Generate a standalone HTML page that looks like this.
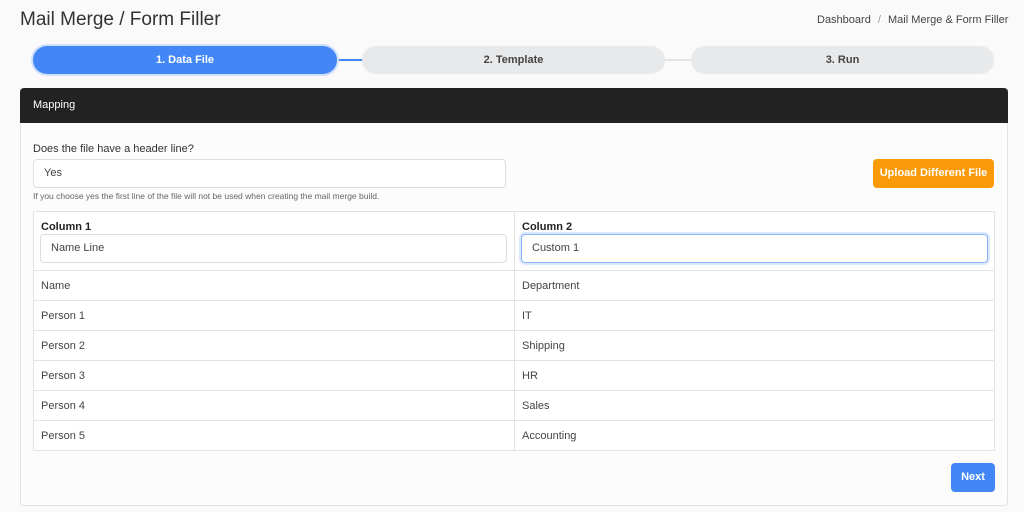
<!DOCTYPE html>
<html><head><style>
*{box-sizing:border-box;margin:0;padding:0}
body{width:1024px;height:512px;background:#fafafa;font-family:"Liberation Sans",Arial,sans-serif;color:#333;position:relative;overflow:hidden}
.a{position:absolute}
.pill{position:absolute;top:46px;height:28px;border-radius:14px;background:#e8e9ea;font-size:11px;font-weight:bold;color:#444;text-align:center;line-height:28px}
.inp{position:absolute;background:#fff;border:1px solid #ddd;border-radius:4px;font-size:11px;color:#444;padding-left:10px}
td{border:1px solid #e3e3e3;font-size:11px;color:#444;padding-left:7px;height:30px}
</style></head><body>
<div class="a" style="left:20px;top:9px;font-size:19px;color:#333">Mail Merge / Form Filler</div>
<div class="a" style="left:817px;top:14px;font-size:11px;color:#444">Dashboard <span style="color:#999;margin:0 4px">/</span> Mail Merge &amp; Form Filler</div>
<div class="a" style="left:330px;top:59px;width:40px;height:2px;background:#4287f5"></div>
<div class="a" style="left:660px;top:59px;width:40px;height:2px;background:#e3e3e3"></div>
<div class="pill" style="left:33px;width:304px;background:#4287f5;color:#fff;box-shadow:0 0 0 2px #cfe0fc">1. Data File</div>
<div class="pill" style="left:362px;width:303px">2. Template</div>
<div class="pill" style="left:691px;width:303px">3. Run</div>
<div class="a" style="left:20px;top:88px;width:988px;height:418px;background:#fcfcfc;border:1px solid #e3e3e3;border-radius:4px"></div>
<div class="a" style="left:20px;top:88px;width:988px;height:35px;background:#222;border-radius:4px 4px 0 0;color:#fff;font-size:11px;padding:11px 0 0 13px">Mapping</div>
<div class="a" style="left:33px;top:143px;font-size:11px;color:#333">Does the file have a header line?</div>
<div class="inp" style="left:33px;top:159px;width:473px;height:29px;line-height:27px">Yes</div>
<div class="a" style="left:33px;top:191px;font-size:8.5px;color:#666">If you choose yes the first line of the file will not be used when creating the mail merge build.</div>
<div class="a" style="left:873px;top:159px;width:121px;height:29px;background:#fb9a08;border-radius:4px;color:#fff;font-size:11px;font-weight:bold;text-align:center;line-height:29px">Upload Different File</div>
<table class="a" style="left:33px;top:211px;width:962px;border-collapse:collapse;background:#fff">
<tr><td style="height:59px;width:481px;vertical-align:top;padding-top:9px;font-weight:bold;color:#222">Column 1</td><td style="vertical-align:top;padding-top:9px;font-weight:bold;color:#222">Column 2</td></tr>
<tr><td>Name</td><td>Department</td></tr>
<tr><td>Person 1</td><td>IT</td></tr>
<tr><td>Person 2</td><td>Shipping</td></tr>
<tr><td>Person 3</td><td>HR</td></tr>
<tr><td>Person 4</td><td>Sales</td></tr>
<tr><td>Person 5</td><td>Accounting</td></tr>
</table>
<div class="inp" style="left:40px;top:234px;width:467px;height:29px;line-height:27px">Name Line</div>
<div class="inp" style="left:521px;top:234px;width:467px;height:29px;line-height:27px;border-color:#8db4f5;box-shadow:0 0 0 2px #dbe7fc">Custom 1</div>
<div class="a" style="left:951px;top:463px;width:44px;height:29px;background:#4287f5;border-radius:4px;color:#fff;font-size:11px;font-weight:bold;text-align:center;line-height:29px">Next</div>
</body></html>
